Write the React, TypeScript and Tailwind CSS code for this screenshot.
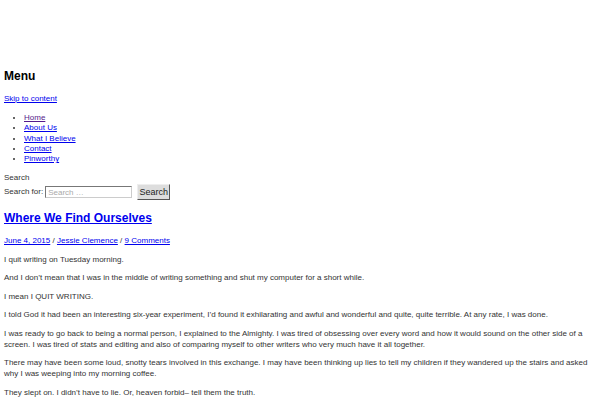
import React from "react";

const links = ["Home", "About Us", "What I Believe", "Contact", "Pinworthy"];

const paragraphs = [
  "I quit writing on Tuesday morning.",
  "And I don’t mean that I was in the middle of writing something and shut my computer for a short while.",
  "I mean I QUIT WRITING.",
  "I told God it had been an interesting six-year experiment, I’d found it exhilarating and awful and wonderful and quite, quite terrible. At any rate, I was done.",
  "I was ready to go back to being a normal person, I explained to the Almighty. I was tired of obsessing over every word and how it would sound on the other side of a screen. I was tired of stats and editing and also of comparing myself to other writers who very much have it all together.",
  "There may have been some loud, snotty tears involved in this exchange. I may have been thinking up lies to tell my children if they wandered up the stairs and asked why I was weeping into my morning coffee.",
  "They slept on. I didn’t have to lie. Or, heaven forbid– tell them the truth.",
];

export default function App() {
  return (
    <div className="min-h-screen bg-white px-[4px] pt-[69px] font-['Liberation_Sans',Arial,sans-serif] text-[8px] text-[#333]">
      {/* HEADER / NAV */}
      <h2 className="text-[12px] font-bold leading-[14px] text-black">Menu</h2>
      <a href="#content" className="mt-[11px] block leading-[10px] text-[#0000ee] underline">
        Skip to content
      </a>
      <ul className="mt-[9px] list-disc pl-[20px] leading-[10.25px]">
        {links.map((l, i) => (
          <li key={l}>
            <a href="#" className={i === 0 ? "text-[#551a8b] underline" : "text-[#0000ee] underline"}>
              {l}
            </a>
          </li>
        ))}
      </ul>

      {/* SEARCH */}
      <p className="mt-[9px] leading-[10px]">Search</p>
      <form className="mt-[1px] flex h-[16px] items-center">
        <label className="mr-[2px]">Search for:</label>
        <input
          type="search"
          placeholder="Search …"
          className="h-[12px] w-[87px] border border-t-[#777] border-l-[#777] border-r-[#ccc] border-b-[#ccc] bg-white px-[2px] text-[8px] leading-[10px] outline-none placeholder:text-[#aaa]"
        />
        <button
          type="button"
          className="ml-[5px] h-[16px] w-[33px] border border-t-[#eee] border-l-[#eee] border-r-[#555] border-b-[#555] bg-[#ddd] text-[9px] leading-[14px] text-[#222]"
        >
          Search
        </button>
      </form>

      {/* POST */}
      <article id="content">
        <h1 className="mt-[10px] text-[12px] font-bold leading-[16px]">
          <a href="#" className="text-[#0000ee] underline">
            Where We Find Ourselves
          </a>
        </h1>
        <p className="mt-[10px] leading-[10px]">
          <a href="#" className="text-[#0000ee] underline">June 4, 2015</a> /{" "}
          <a href="#" className="text-[#0000ee] underline">Jessie Clemence</a> /{" "}
          <a href="#" className="text-[#0000ee] underline">9 Comments</a>
        </p>
        <div className="mt-[7.5px] pr-[8px]">
          {paragraphs.map((p, i) => (
            <p key={i} className="mb-[7.5px] leading-[11px]">
              {p}
            </p>
          ))}
        </div>
      </article>
    </div>
  );
}
